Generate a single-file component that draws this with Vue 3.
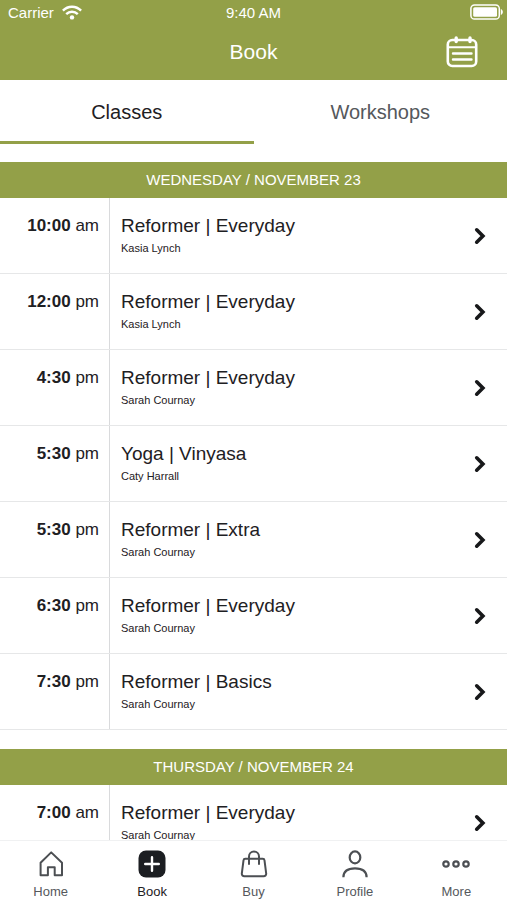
<script setup>
import { ref } from 'vue'

const tabs = ['Classes', 'Workshops']
const activeTab = ref('Classes')

const days = [
  {
    label: 'WEDNESDAY / NOVEMBER 23',
    classes: [
      { time: '10:00', period: 'am', name: 'Reformer | Everyday', teacher: 'Kasia Lynch' },
      { time: '12:00', period: 'pm', name: 'Reformer | Everyday', teacher: 'Kasia Lynch' },
      { time: '4:30', period: 'pm', name: 'Reformer | Everyday', teacher: 'Sarah Cournay' },
      { time: '5:30', period: 'pm', name: 'Yoga | Vinyasa', teacher: 'Caty Harrall' },
      { time: '5:30', period: 'pm', name: 'Reformer | Extra', teacher: 'Sarah Cournay' },
      { time: '6:30', period: 'pm', name: 'Reformer | Everyday', teacher: 'Sarah Cournay' },
      { time: '7:30', period: 'pm', name: 'Reformer | Basics', teacher: 'Sarah Cournay' },
    ],
  },
  {
    label: 'THURSDAY / NOVEMBER 24',
    classes: [
      { time: '7:00', period: 'am', name: 'Reformer | Everyday', teacher: 'Sarah Cournay' },
    ],
  },
]
</script>

<template>
  <div class="app">
    <header class="top">
      <div class="status">
        <div class="carrier">
          <span>Carrier</span>
          <svg width="20" height="15" viewBox="0 0 20 15" fill="none" stroke="#fff" stroke-width="2.4">
            <path d="M0.9 5.6C6 0.4 14 0.4 19.1 5.6" />
            <path d="M4.2 9.1C7.5 5.9 12.5 5.9 15.8 9.1" />
            <circle cx="10" cy="12.4" r="2.2" fill="#fff" stroke="none" />
          </svg>
        </div>
        <span>9:40 AM</span>
        <div class="battery">
          <svg width="33" height="16" viewBox="0 0 33 16" fill="none">
            <rect x="0.9" y="0.9" width="28.4" height="14.2" rx="3.6" stroke="#fff" stroke-width="1.5" />
            <rect x="3.2" y="3.2" width="23.8" height="9.6" rx="1.6" fill="#fff" />
            <path d="M30.8 5c1.3.5 2 1.6 2 3s-.7 2.5-2 3z" fill="#fff" />
          </svg>
        </div>
      </div>
      <div class="title-bar">
        <h1>Book</h1>
        <button class="calendar" type="button" aria-label="Calendar">
          <svg width="32" height="32" viewBox="0 0 32 32" fill="none" stroke="#fff" stroke-width="2.6" stroke-linecap="round">
            <rect x="1.8" y="4" width="28.4" height="26" rx="4.5" />
            <path d="M2 11.3H30" stroke-width="2" />
            <path d="M10.2 2V5.5M24 2V5.5" stroke-width="3.4" />
            <path d="M7 17.5H25.5M7 23.5H25.5" stroke-width="2.4" />
          </svg>
        </button>
      </div>
    </header>

    <nav class="tabs" aria-label="Booking type">
      <button
        v-for="tab in tabs"
        :key="tab"
        type="button"
        class="tab"
        :class="{ active: tab === activeTab }"
        @click="activeTab = tab"
      >{{ tab }}</button>
    </nav>

    <main class="schedule">
      <section v-for="day in days" :key="day.label" class="day">
        <h2>{{ day.label }}</h2>
        <ul>
          <li v-for="(item, index) in day.classes" :key="index">
            <a href="#" class="row">
              <span class="time"><b>{{ item.time }}</b> {{ item.period }}</span>
              <span class="info">
                <span class="name">{{ item.name }}</span>
                <span class="teacher">{{ item.teacher }}</span>
              </span>
              <svg class="chevron" width="12" height="18" viewBox="0 0 12 18" fill="none" stroke="#17181a" stroke-width="3.6" stroke-linecap="round">
                <path d="M2.7 2.8L8.9 9L2.7 15.2" />
              </svg>
            </a>
          </li>
        </ul>
      </section>
    </main>

    <nav class="bottom" aria-label="Main">
      <a href="#">
        <svg width="28" height="28" viewBox="0 0 28 28" fill="none" stroke="#4c4f53" stroke-width="2" stroke-linejoin="round">
          <path d="M14.2 2.4L3.6 12.8V25.2H10.9V17.3H17.7V25.2H25V12.8Z" />
        </svg>
        <span>Home</span>
      </a>
      <a href="#" class="current" aria-current="page">
        <svg width="28" height="28" viewBox="0 0 28 28" fill="none">
          <rect x="0.5" y="0.5" width="27" height="27" rx="7.5" fill="#1c1e22" />
          <path d="M14 7.2V20.8M7.2 14H20.8" stroke="#fff" stroke-width="2.4" stroke-linecap="round" />
        </svg>
        <span>Book</span>
      </a>
      <a href="#">
        <svg width="28" height="28" viewBox="0 0 28 28" fill="none" stroke="#4c4f53" stroke-width="2" stroke-linecap="round" stroke-linejoin="round">
          <path d="M5.3 8.8H22.700a1.8 1.8 0 0 1 1.8 1.6L26.2 23.6a2.5 2.5 0 0 1-2.5 2.7H4.3a2.5 2.5 0 0 1-2.5-2.7L3.5 10.4a1.8 1.8 0 0 1 1.8-1.6Z" />
          <path d="M9 14V6.6a5 5 0 0 1 10 0V14" />
        </svg>
        <span>Buy</span>
      </a>
      <a href="#">
        <svg width="28" height="28" viewBox="0 0 28 28" fill="none" stroke="#4c4f53" stroke-width="2.2">
          <ellipse cx="14" cy="7.4" rx="5.3" ry="6" />
          <path d="M2.4 27.3C2.4 21 7 18.4 14 18.4S25.6 21 25.6 27.3" />
        </svg>
        <span>Profile</span>
      </a>
      <a href="#">
        <svg width="28" height="28" viewBox="0 0 28 28" fill="none" stroke="#4c4f53" stroke-width="2.2">
          <circle cx="4" cy="14" r="2.7" />
          <circle cx="14" cy="14" r="2.7" />
          <circle cx="24" cy="14" r="2.7" />
        </svg>
        <span>More</span>
      </a>
    </nav>
  </div>
</template>

<style>
body {
  margin: 0;
  background: #fff;
}
</style>

<style scoped>
.app {
  display: flex;
  flex-direction: column;
  height: 100vh;
  overflow: hidden;
  font-family: "Liberation Sans", Arial, sans-serif;
  color: #1e2023;
  background: #fff;
}

svg {
  display: block;
  flex: none;
}

button {
  padding: 0;
  border: 0;
  background: none;
  font: inherit;
  color: inherit;
}

a {
  color: inherit;
  text-decoration: none;
}

.top {
  flex: none;
  color: #fff;
  background: #93a048;
}

.status {
  display: grid;
  grid-template-columns: 1fr auto 1fr;
  align-items: center;
  height: 24px;
  padding: 0 4px;
  font-size: 15px;
}

.carrier {
  display: flex;
  align-items: center;
  gap: 8px;
  padding-left: 4px;
}

.battery {
  display: flex;
  justify-content: flex-end;
}

.title-bar {
  display: grid;
  grid-template-columns: 1fr auto 1fr;
  align-items: center;
  height: 56px;
  padding: 0 29px;
}

h1 {
  grid-column: 2;
  margin: 0;
  font-size: 21px;
  font-weight: 400;
}

.calendar {
  justify-self: end;
}

.tabs {
  display: flex;
  flex: none;
}

.tab {
  flex: 1;
  height: 64px;
  border-top: 3px solid transparent;
  border-bottom: 3px solid transparent;
  font-size: 20px;
  color: #55585c;
}

.tab.active {
  color: #1e2023;
  border-bottom-color: #93a048;
}

.schedule {
  display: flex;
  flex: 1;
  flex-direction: column;
  gap: 19px;
  min-height: 0;
  padding-top: 18px;
  overflow: hidden;
}

.day {
  flex: none;
}

h2 {
  margin: 0;
  font-size: 15px;
  font-weight: 400;
  line-height: 36px;
  text-align: center;
  color: #fff;
  background: #93a048;
}

ul {
  margin: 0;
  padding: 0;
  list-style: none;
}

.row {
  display: flex;
  align-items: stretch;
  height: 75px;
  padding-right: 21px;
  border-bottom: 1px solid #e6e7e8;
}

.time {
  width: 99px;
  padding: 16px 10px 0 0;
  border-right: 1px solid #d9dadc;
  font-size: 17px;
  line-height: 24px;
  text-align: right;
}

.info {
  display: flex;
  flex: 1;
  flex-direction: column;
  padding: 16px 0 0 11px;
}

.name {
  font-size: 19px;
  line-height: 24px;
}

.teacher {
  font-size: 11px;
  line-height: 20px;
}

.chevron {
  align-self: center;
}

.bottom {
  display: flex;
  flex: none;
  height: 59px;
  border-top: 1px solid #f0f1f2;
  background: #fff;
}

.bottom a {
  display: flex;
  flex: 1;
  flex-direction: column;
  align-items: center;
  gap: 6px;
  padding-top: 9px;
  font-size: 13px;
  line-height: 16px;
  color: #55585c;
}

.bottom .current {
  color: #1e2023;
}
</style>
